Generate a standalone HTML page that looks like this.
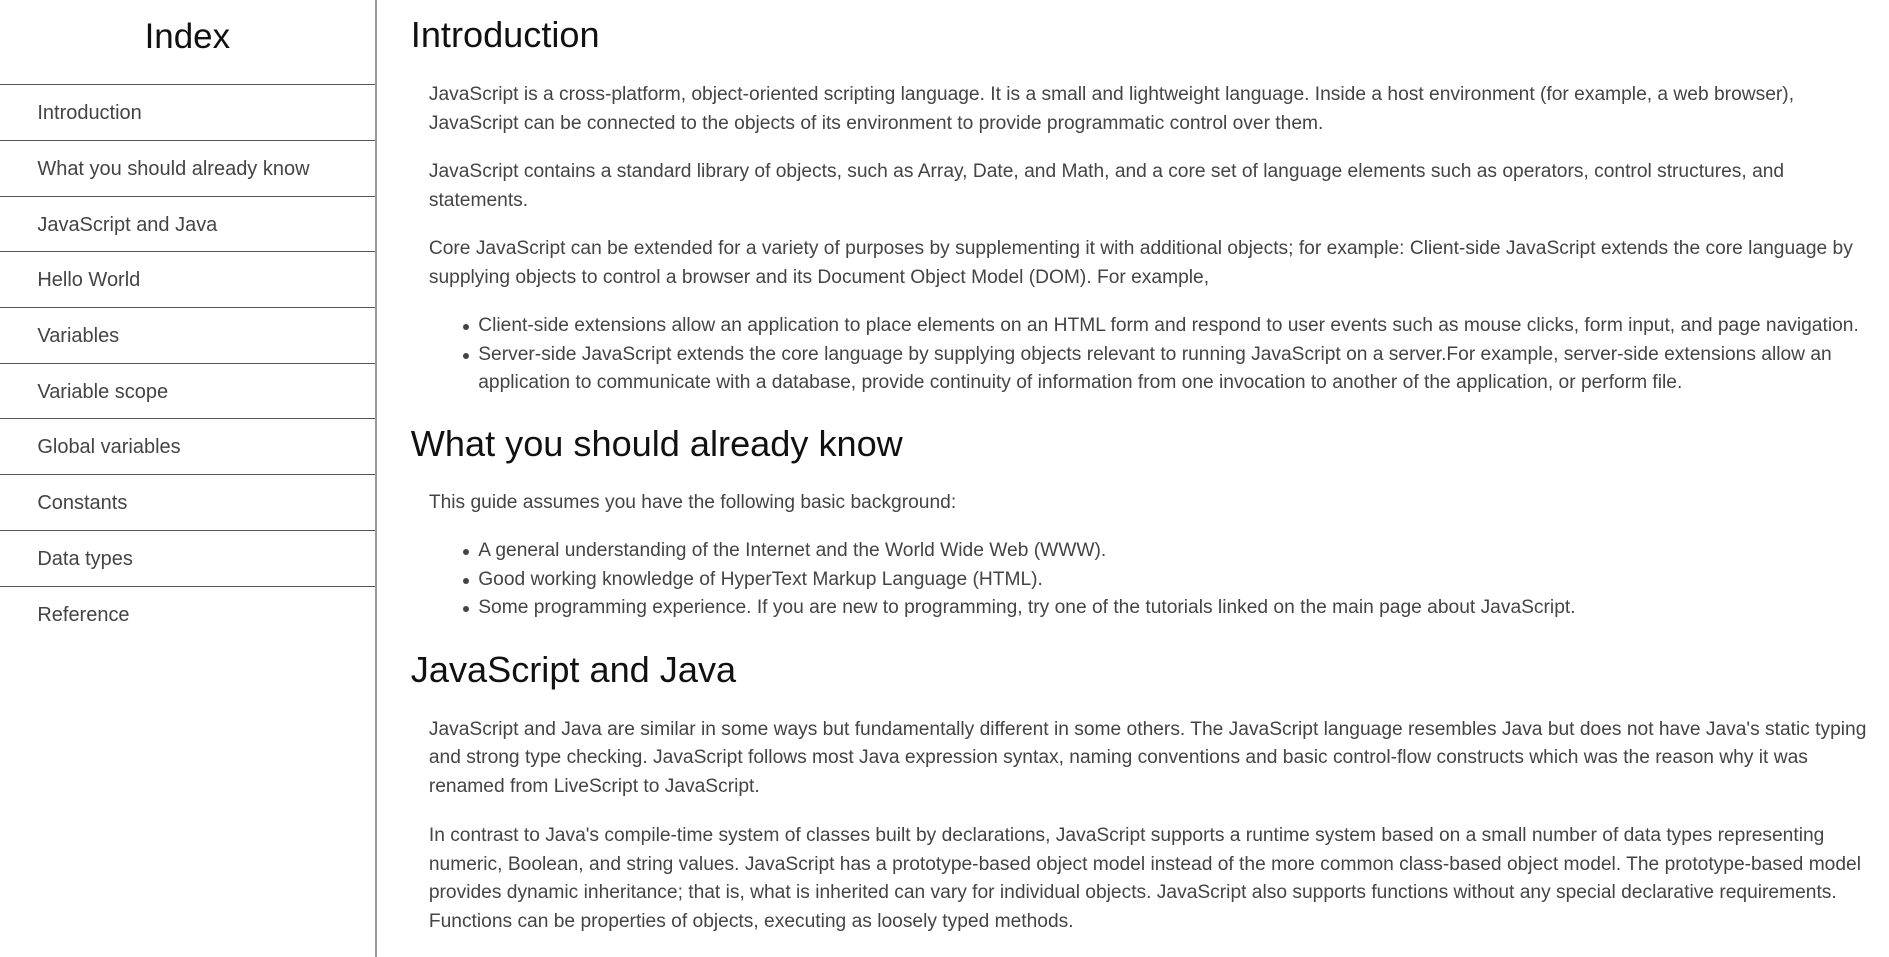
<!DOCTYPE html>
<html><head><meta charset="utf-8">
<style>
html,body{margin:0;padding:0;background:#fff;}
body{zoom:1.2047;width:1568px;height:794px;position:relative;overflow:hidden;font-family:"Liberation Sans",Arial,sans-serif;}
#side{position:absolute;left:0;top:0;width:311px;height:794px;border-right:2px solid #9a9a9a;}
#side h1{margin:0;position:absolute;top:12px;left:0;width:311px;text-align:center;font-weight:normal;font-size:29px;line-height:38px;color:#111;}
#side ul{list-style:none;margin:0;padding:0;position:absolute;top:70px;left:0;width:311px;border-top:1px solid #555;}
#side li{height:45.4px;line-height:48px;border-bottom:1px solid #555;padding-left:31px;font-size:16.6px;color:#444;}
#side li:last-child{border-bottom:none;}
.h{position:absolute;left:341px;margin:0;font-weight:normal;font-size:30px;line-height:36px;color:#111;white-space:nowrap;}
.p{position:absolute;left:356px;margin:0;font-size:15.95px;line-height:24px;color:#444;white-space:nowrap;}
.l{position:absolute;left:356px;margin:0;padding:0;list-style:none;font-size:15.95px;line-height:23.7px;color:#444;white-space:nowrap;}
.l li{position:relative;padding-left:41px;}
.l li:before{content:"";position:absolute;left:28px;top:10px;width:5px;height:5px;border-radius:50%;background:#444;}
</style></head><body>
<div id="side">
<h1>Index</h1>
<ul>
<li>Introduction</li><li>What you should already know</li><li>JavaScript and Java</li><li>Hello World</li><li>Variables</li><li>Variable scope</li><li>Global variables</li><li>Constants</li><li>Data types</li><li>Reference</li>
</ul>
</div>

<h2 class="h" style="top:11px">Introduction</h2>
<p class="p" style="top:67px">JavaScript is a cross-platform, object-oriented scripting language. It is a small and lightweight language. Inside a host environment (for example, a web browser),<br>JavaScript can be connected to the objects of its environment to provide programmatic control over them.</p>
<p class="p" style="top:131px">JavaScript contains a standard library of objects, such as Array, Date, and Math, and a core set of language elements such as operators, control structures, and<br>statements.</p>
<p class="p" style="top:195px">Core JavaScript can be extended for a variety of purposes by supplementing it with additional objects; for example: Client-side JavaScript extends the core language by<br>supplying objects to control a browser and its Document Object Model (DOM). For example,</p>
<ul class="l" style="top:259px">
<li>Client-side extensions allow an application to place elements on an HTML form and respond to user events such as mouse clicks, form input, and page navigation.</li>
<li>Server-side JavaScript extends the core language by supplying objects relevant to running JavaScript on a server.For example, server-side extensions allow an<br>application to communicate with a database, provide continuity of information from one invocation to another of the application, or perform file.</li>
</ul>
<h2 class="h" style="top:350px">What you should already know</h2>
<p class="p" style="top:406px">This guide assumes you have the following basic background:</p>
<ul class="l" style="top:446px">
<li>A general understanding of the Internet and the World Wide Web (WWW).</li>
<li>Good working knowledge of HyperText Markup Language (HTML).</li>
<li>Some programming experience. If you are new to programming, try one of the tutorials linked on the main page about JavaScript.</li>
</ul>
<h2 class="h" style="top:538px">JavaScript and Java</h2>
<p class="p" style="top:594px">JavaScript and Java are similar in some ways but fundamentally different in some others. The JavaScript language resembles Java but does not have Java's static typing<br>and strong type checking. JavaScript follows most Java expression syntax, naming conventions and basic control-flow constructs which was the reason why it was<br>renamed from LiveScript to JavaScript.</p>
<p class="p" style="top:682px">In contrast to Java's compile-time system of classes built by declarations, JavaScript supports a runtime system based on a small number of data types representing<br>numeric, Boolean, and string values. JavaScript has a prototype-based object model instead of the more common class-based object model. The prototype-based model<br>provides dynamic inheritance; that is, what is inherited can vary for individual objects. JavaScript also supports functions without any special declarative requirements.<br>Functions can be properties of objects, executing as loosely typed methods.</p>
</body></html>
